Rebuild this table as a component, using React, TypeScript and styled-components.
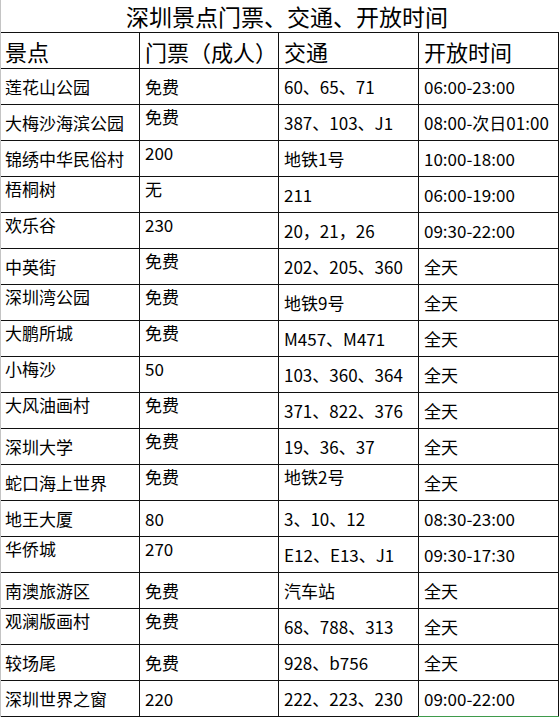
import React from "react";
import styled, { createGlobalStyle } from "styled-components";

const Global = createGlobalStyle`
  html, body { margin: 0; padding: 0; background: #ffffff; }
  body { font-family: "Noto Sans CJK SC", "Noto Sans", sans-serif; color: #000; }
`;

const Sheet = styled.div`
  display: grid;
  grid-template-columns: 139px 139px 140px 140px;
  grid-template-rows: 33px;
  grid-auto-rows: 36px;
  width: 558px;
  border-left: 1px solid #c4c4c4;
  box-sizing: border-box;
  position: relative;
`;

const Title = styled.div`
  grid-column: 1 / -1;
  box-sizing: border-box;
  border-bottom: 1px solid #111;
  display: flex;
  align-items: center;
  justify-content: center;
  padding-left: 14px;
  font-size: 23px;
  line-height: 1;
`;

const Cell = styled.div<{ $top?: boolean; $head?: boolean }>`
  box-sizing: border-box;
  border-right: 1px solid #111;
  border-bottom: 1px solid #111;
  display: flex;
  align-items: ${(p) => (p.$top ? "flex-start" : "center")};
  padding: 2px 4px 0 5px;
  font-size: ${(p) => (p.$head ? "22px" : "17px")};
  line-height: 1.2;
  white-space: nowrap;
  overflow: visible;
  &:nth-child(4n + 2) { padding-left: 4px; }
`;

const Selection = styled.div`
  position: absolute;
  left: 417px;
  bottom: -1px;
  width: 141px;
  height: 2px;
  background: #3f9a4c;
`;

type Row = [string, string, string, string, string];

const rows: Row[] = [
  ["莲花山公园", "免费", "60、65、71", "06:00-23:00", "mmmm"],
  ["大梅沙海滨公园", "免费", "387、103、J1", "08:00-次日01:00", "mtmm"],
  ["锦绣中华民俗村", "200", "地铁1号", "10:00-18:00", "mtmm"],
  ["梧桐树", "无", "211", "06:00-19:00", "ttmm"],
  ["欢乐谷", "230", "20，21，26", "09:30-22:00", "ttmm"],
  ["中英街", "免费", "202、205、360", "全天", "mtmm"],
  ["深圳湾公园", "免费", "地铁9号", "全天", "ttmm"],
  ["大鹏所城", "免费", "M457、M471", "全天", "ttmm"],
  ["小梅沙", "50", "103、360、364", "全天", "ttmm"],
  ["大风油画村", "免费", "371、822、376", "全天", "ttmm"],
  ["深圳大学", "免费", "19、36、37", "全天", "mtmm"],
  ["蛇口海上世界", "免费", "地铁2号", "全天", "mttm"],
  ["地王大厦", "80", "3、10、12", "08:30-23:00", "mmmm"],
  ["华侨城", "270", "E12、E13、J1", "09:30-17:30", "ttmm"],
  ["南澳旅游区", "免费", "汽车站", "全天", "mmmm"],
  ["观澜版画村", "免费", "68、788、313", "全天", "ttmm"],
  ["较场尾", "免费", "928、b756", "全天", "mmmm"],
  ["深圳世界之窗", "220", "222、223、230", "09:00-22:00", "mmmm"],
];

const headers = ["景点", "门票（成人）", "交通", "开放时间"];

export default function App() {
  return (
    <>
      <Global />
      <Sheet>
        <Title>深圳景点门票、交通、开放时间</Title>
        {headers.map((h) => (
          <Cell key={h} $head>
            {h}
          </Cell>
        ))}
        {rows.map((r) =>
          r.slice(0, 4).map((v, i) => (
            <Cell key={r[0] + i} $top={r[4][i] === "t"}>
              {v}
            </Cell>
          ))
        )}
        <Selection />
      </Sheet>
    </>
  );
}
